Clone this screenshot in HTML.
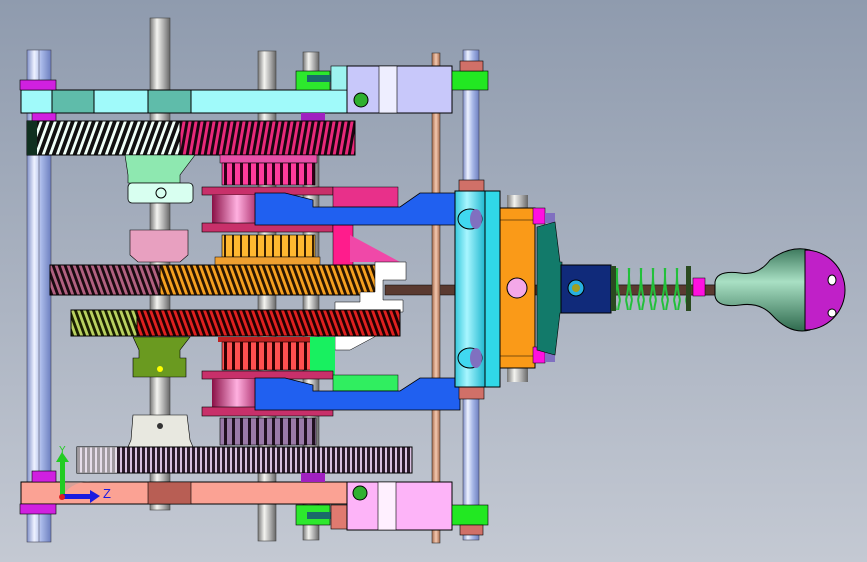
<!DOCTYPE html>
<html><head><meta charset="utf-8"><style>
html,body{margin:0;padding:0;width:867px;height:562px;overflow:hidden}
svg{display:block}
</style></head><body>
<svg width="867" height="562" viewBox="0 0 867 562" xmlns="http://www.w3.org/2000/svg" font-family="Liberation Sans, sans-serif">
<defs>
<linearGradient id="bg" x1="0" y1="0" x2="0" y2="1"><stop offset="0" stop-color="#8f9bae"/><stop offset="1" stop-color="#c4c9d3"/></linearGradient>
<linearGradient id="rod" x1="0" x2="1"><stop offset="0" stop-color="#7f8fc8"/><stop offset=".3" stop-color="#eef2ff"/><stop offset=".6" stop-color="#a8b8e8"/><stop offset="1" stop-color="#6d7fbf"/></linearGradient>
<linearGradient id="shaft" x1="0" x2="1"><stop offset="0" stop-color="#777"/><stop offset=".35" stop-color="#f4f4f0"/><stop offset=".7" stop-color="#aaa"/><stop offset="1" stop-color="#666"/></linearGradient>
<linearGradient id="cop" x1="0" x2="1"><stop offset="0" stop-color="#a86a4c"/><stop offset=".5" stop-color="#f3c9b0"/><stop offset="1" stop-color="#a86a4c"/></linearGradient>
<linearGradient id="cy" x1="0" x2="1"><stop offset="0" stop-color="#36c8dc"/><stop offset=".4" stop-color="#a8f6ff"/><stop offset="1" stop-color="#20b8d0"/></linearGradient>
<linearGradient id="pul" x1="0" x2="1"><stop offset="0" stop-color="#8a0f45"/><stop offset=".5" stop-color="#ffb0e0"/><stop offset="1" stop-color="#9a1050"/></linearGradient>
<linearGradient id="sph" x1="0" x2="0" y1="0" y2="1"><stop offset="0" stop-color="#3e7a5e"/><stop offset=".4" stop-color="#a9e0c4"/><stop offset="1" stop-color="#2f6a4e"/></linearGradient>
<pattern id="gBW" width="7" height="10" patternUnits="userSpaceOnUse" patternTransform="skewX(-20)"><rect width="7" height="10" fill="#111"/><rect width="3" height="10" fill="#f0fff8"/></pattern>
<pattern id="gPk" width="6" height="10" patternUnits="userSpaceOnUse" patternTransform="skewX(-10)"><rect width="6" height="10" fill="#1a0510"/><rect width="3" height="10" fill="#e8287a"/></pattern>
<pattern id="gPk2" width="6" height="10" patternUnits="userSpaceOnUse" patternTransform="skewX(20)"><rect width="6" height="10" fill="#1a0a10"/><rect width="3" height="10" fill="#b06080"/></pattern>
<pattern id="gOr" width="6" height="10" patternUnits="userSpaceOnUse" patternTransform="skewX(20)"><rect width="6" height="10" fill="#2a1500"/><rect width="3" height="10" fill="#f5a020"/></pattern>
<pattern id="gGr" width="6" height="10" patternUnits="userSpaceOnUse" patternTransform="skewX(20)"><rect width="6" height="10" fill="#1a2000"/><rect width="3" height="10" fill="#b8d060"/></pattern>
<pattern id="gRd" width="6" height="10" patternUnits="userSpaceOnUse" patternTransform="skewX(20)"><rect width="6" height="10" fill="#200000"/><rect width="3" height="10" fill="#e02020"/></pattern>
<pattern id="gPu" width="5" height="10" patternUnits="userSpaceOnUse"><rect width="5" height="10" fill="#2a1a2a"/><rect width="2" height="10" fill="#d8c0e0"/></pattern>
<pattern id="tPk" width="8" height="10" patternUnits="userSpaceOnUse"><rect width="8" height="10" fill="#ff3c9c"/><rect width="3" height="10" fill="#300018"/></pattern>
<pattern id="tOr" width="8" height="10" patternUnits="userSpaceOnUse"><rect width="8" height="10" fill="#ffb830"/><rect width="2" height="10" fill="#3a2000"/></pattern>
<pattern id="tRd" width="8" height="10" patternUnits="userSpaceOnUse"><rect width="8" height="10" fill="#ff5050"/><rect width="3" height="10" fill="#300000"/></pattern>
<pattern id="tPu" width="8" height="10" patternUnits="userSpaceOnUse"><rect width="8" height="10" fill="#9a7aa8"/><rect width="3" height="10" fill="#201020"/></pattern>
<pattern id="spr" width="12" height="50" patternUnits="userSpaceOnUse"><path d="M2 0 Q8 25 2 50 M8 0 Q2 25 8 50" stroke="#22c03a" stroke-width="2" fill="none"/></pattern>
</defs>
<rect width="867" height="562" fill="url(#bg)"/>

<rect x="27" y="50" width="24" height="492" fill="url(#rod)" stroke="#445" stroke-width=".6"/>
<line x1="39" y1="50" x2="39" y2="542" stroke="#556" stroke-width=".6"/>
<rect x="150" y="18" width="20" height="492" fill="url(#shaft)" stroke="#444" stroke-width=".6"/>
<rect x="258" y="51" width="18" height="490" fill="url(#shaft)" stroke="#444" stroke-width=".6"/>
<rect x="303" y="52" width="16" height="488" fill="url(#shaft)" stroke="#444" stroke-width=".6"/>
<rect x="385" y="285" width="335" height="10" fill="#5a3a30" stroke="#000" stroke-width=".5"/>
<rect x="432" y="53" width="8" height="490" fill="url(#cop)" stroke="#333" stroke-width=".6"/>
<rect x="463" y="50" width="16" height="490" fill="url(#rod)" stroke="#445" stroke-width=".6"/>

<rect x="21" y="90" width="328" height="23" fill="#a0fafa" stroke="#000"/>
<rect x="52" y="90" width="42" height="23" fill="#5fbcaa" stroke="#000"/>
<rect x="148" y="90" width="43" height="23" fill="#5fbcaa" stroke="#000"/>
<rect x="20" y="80" width="36" height="10" fill="#d020e0" stroke="#000" stroke-width=".6"/>
<rect x="32" y="113" width="24" height="10" fill="#d020e0" stroke="#000" stroke-width=".6"/>
<rect x="296" y="71" width="34" height="19" fill="#2de82d" stroke="#000" stroke-width=".6"/>
<rect x="307" y="75" width="25" height="7" fill="#1a6a6a"/>
<rect x="331" y="66" width="18" height="24" fill="#9df3f0" stroke="#000" stroke-width=".6"/>
<rect x="347" y="66" width="105" height="47" fill="#c8c8fa" stroke="#000"/>
<rect x="379" y="66" width="18" height="47" fill="#eeeeff" stroke="#000" stroke-width=".6"/>
<circle cx="361" cy="100" r="7" fill="#2fb02f" stroke="#000"/>
<rect x="452" y="71" width="36" height="19" fill="#22e822" stroke="#000" stroke-width=".6"/>
<rect x="460" y="61" width="23" height="10" fill="#d07068" stroke="#000" stroke-width=".6"/>
<rect x="301" y="113" width="24" height="8" fill="#a020c0"/>

<rect x="27" y="121" width="153" height="34" fill="url(#gBW)" stroke="#000"/>
<rect x="180" y="121" width="175" height="34" fill="url(#gPk)" stroke="#000"/>
<rect x="27" y="121" width="10" height="34" fill="#103020"/>

<path d="M125 155 H195 L180 175 V183 H128 V175 Z" fill="#8ee8b0" stroke="#000" stroke-width=".6"/>
<rect x="128" y="183" width="65" height="20" rx="4" fill="#d8fff0" stroke="#000" stroke-width=".8"/>
<circle cx="161" cy="193" r="5" fill="none" stroke="#000"/>
<path d="M130 230 H188 V255 L180 262 H138 L130 255 Z" fill="#e8a0c0" stroke="#000" stroke-width=".6"/>

<rect x="220" y="155" width="97" height="8" fill="#e850a8" stroke="#000" stroke-width=".5"/>
<rect x="222" y="163" width="93" height="22" fill="url(#tPk)" stroke="#000" stroke-width=".6"/>
<rect x="202" y="187" width="131" height="8" fill="#c8306a" stroke="#000" stroke-width=".6"/>
<rect x="212" y="195" width="50" height="28" fill="url(#pul)"/>
<rect x="202" y="223" width="131" height="9" fill="#c8306a" stroke="#000" stroke-width=".6"/>
<rect x="333" y="187" width="65" height="20" fill="#e8308a" stroke="#000" stroke-width=".5"/>
<rect x="333" y="225" width="20" height="40" fill="#ff1c8c" stroke="#000" stroke-width=".5"/>
<path d="M350 235 L400 262 H350 Z" fill="#f048a8"/>
<rect x="222" y="235" width="93" height="22" fill="url(#tOr)" stroke="#000" stroke-width=".6"/>
<rect x="215" y="257" width="105" height="8" fill="#f0a030" stroke="#000" stroke-width=".5"/>

<rect x="50" y="265" width="110" height="30" fill="url(#gPk2)" stroke="#000"/>
<rect x="160" y="265" width="218" height="30" fill="url(#gOr)" stroke="#000"/>
<path d="M375 262 H406 V280 H383 V300 H403 V312 H378 V335 L350 350 H335 V302 H360 V292 H375 Z" fill="#fff" stroke="#000" stroke-width=".5"/>

<rect x="71" y="310" width="66" height="26" fill="url(#gGr)" stroke="#000"/>
<rect x="137" y="310" width="263" height="26" fill="url(#gRd)" stroke="#000"/>

<path d="M133 337 H190 L180 350 V358 H186 V377 H133 V358 H139 V350 Z" fill="#6a9a20" stroke="#000" stroke-width=".6"/>
<circle cx="160" cy="369" r="3" fill="#ff0"/>
<rect x="218" y="337" width="97" height="5" fill="#c02020"/>
<rect x="222" y="342" width="93" height="28" fill="url(#tRd)" stroke="#000" stroke-width=".6"/>
<rect x="310" y="337" width="25" height="40" fill="#18f060"/>
<rect x="202" y="371" width="131" height="8" fill="#c8306a" stroke="#000" stroke-width=".6"/>
<rect x="212" y="379" width="50" height="28" fill="url(#pul)"/>
<rect x="202" y="407" width="131" height="9" fill="#c8306a" stroke="#000" stroke-width=".6"/>
<rect x="333" y="375" width="65" height="16" fill="#30ee60" stroke="#000" stroke-width=".5"/>
<rect x="220" y="418" width="96" height="27" fill="url(#tPu)" stroke="#000" stroke-width=".6"/>
<path d="M133 415 H187 L190 440 L193 447 H128 L131 440 Z" fill="#e8e8e0" stroke="#000" stroke-width=".6"/>
<circle cx="160" cy="426" r="3" fill="#333"/>

<rect x="77" y="447" width="335" height="26" fill="url(#gPu)" stroke="#000"/>
<rect x="77" y="447" width="40" height="26" fill="#f0f0f0" opacity=".6"/>

<path d="M255 193 H285 L313 200 V207 H400 L420 193 H460 V225 H255 Z" fill="#2060f0" stroke="#000" stroke-width=".8"/>
<path d="M255 378 H285 L313 385 V391 H400 L420 378 H460 V410 H255 Z" fill="#2060f0" stroke="#000" stroke-width=".8"/>

<rect x="21" y="482" width="328" height="22" fill="#fba294" stroke="#000"/>
<rect x="148" y="482" width="43" height="22" fill="#b85e54" stroke="#000" stroke-width=".6"/>
<rect x="32" y="471" width="24" height="11" fill="#d020e0" stroke="#000" stroke-width=".6"/>
<rect x="20" y="504" width="36" height="10" fill="#d020e0" stroke="#000" stroke-width=".6"/>
<rect x="301" y="473" width="24" height="9" fill="#a020c0"/>
<rect x="296" y="505" width="34" height="20" fill="#2de82d" stroke="#000" stroke-width=".6"/>
<rect x="307" y="512" width="25" height="7" fill="#1a6a6a"/>
<rect x="331" y="505" width="18" height="24" fill="#e07a70" stroke="#000" stroke-width=".6"/>
<rect x="347" y="482" width="105" height="48" fill="#fdb4f8" stroke="#000"/>
<rect x="378" y="482" width="18" height="48" fill="#fff0ff" stroke="#000" stroke-width=".6"/>
<circle cx="360" cy="493" r="7" fill="#2fb02f" stroke="#000"/>
<rect x="452" y="505" width="36" height="20" fill="#22e822" stroke="#000" stroke-width=".6"/>
<rect x="460" y="525" width="23" height="10" fill="#d07068" stroke="#000" stroke-width=".6"/>

<path d="M63 495 A30 30 0 0 1 92 482 L92 482 L63 482 Z" fill="#a0a0a0" opacity=".4"/>
<rect x="60" y="460" width="5" height="36" fill="#22cc22"/>
<path d="M56 462 L62 452 L69 462 Z" fill="#22cc22"/>
<rect x="62" y="494" width="30" height="5" fill="#1a1ae0"/>
<path d="M90 490 L100 496 L90 503 Z" fill="#1a1ae0"/>
<circle cx="62" cy="497" r="3" fill="#e02020"/>
<text x="59" y="453" font-size="10" fill="#22cc22">Y</text>
<text x="103" y="498" font-size="13" fill="#1a1ae0">Z</text>

<rect x="459" y="180" width="25" height="12" fill="#d07068" stroke="#000" stroke-width=".6"/>
<rect x="459" y="387" width="25" height="12" fill="#d07068" stroke="#000" stroke-width=".6"/>
<rect x="455" y="191" width="30" height="196" fill="url(#cy)" stroke="#000"/>
<rect x="485" y="191" width="15" height="196" fill="#30d8e8" stroke="#000"/>
<ellipse cx="470" cy="219" rx="12" ry="10" fill="#40d8f0" stroke="#000"/>
<ellipse cx="476" cy="219" rx="6" ry="10" fill="#8070c0"/>
<ellipse cx="470" cy="358" rx="12" ry="10" fill="#40d8f0" stroke="#000"/>
<ellipse cx="476" cy="358" rx="6" ry="10" fill="#8070c0"/>
<rect x="507" y="195" width="21" height="14" fill="url(#shaft)"/>
<rect x="507" y="368" width="21" height="14" fill="url(#shaft)"/>
<rect x="500" y="208" width="35" height="160" fill="#fa9a18" stroke="#000"/>
<line x1="500" y1="220" x2="535" y2="220" stroke="#000" stroke-width=".6"/>
<line x1="500" y1="356" x2="535" y2="356" stroke="#000" stroke-width=".6"/>
<circle cx="517" cy="288" r="10" fill="#f4a8e8" stroke="#000"/>
<rect x="533" y="208" width="12" height="16" fill="#ff10e0" stroke="#000" stroke-width=".5"/>
<rect x="545" y="213" width="10" height="10" fill="#8070c0"/>
<rect x="533" y="347" width="12" height="16" fill="#ff10e0" stroke="#000" stroke-width=".5"/>
<rect x="545" y="352" width="10" height="10" fill="#8070c0"/>
<path d="M537 227 L555 222 L560 262 H562 V313 H560 L555 355 L537 350 Z" fill="#127a6a" stroke="#000" stroke-width=".6"/>
<rect x="561" y="265" width="50" height="48" fill="#102a7a" stroke="#000"/>
<circle cx="576" cy="288" r="8" fill="#28b0e0" stroke="#000"/>
<circle cx="576" cy="288" r="4" fill="#a0a020"/>
<rect x="611" y="285" width="105" height="10" fill="#5a3a30" stroke="#000" stroke-width=".5"/>
<rect x="611" y="266" width="5" height="45" fill="#2a4a20"/>
<rect x="616" y="268" width="70" height="42" fill="url(#spr)"/>
<rect x="686" y="266" width="5" height="45" fill="#2a4a20"/>
<rect x="693" y="278" width="12" height="18" fill="#ff10e0" stroke="#000" stroke-width=".5"/>
<path d="M715 282 Q717 270 740 273 Q758 276 770 260 Q790 245 810 250 V330 Q790 335 772 315 Q760 302 740 305 Q717 308 715 296 Z" fill="url(#sph)" stroke="#000"/>
<path d="M805 250 A40 40 0 0 1 805 330 Z" fill="#c020c8" stroke="#000"/>
<ellipse cx="832" cy="280" rx="4" ry="5" fill="#fff" stroke="#000"/>
<ellipse cx="832" cy="313" rx="4" ry="4" fill="#fff" stroke="#000"/>
</svg>
</body></html>
